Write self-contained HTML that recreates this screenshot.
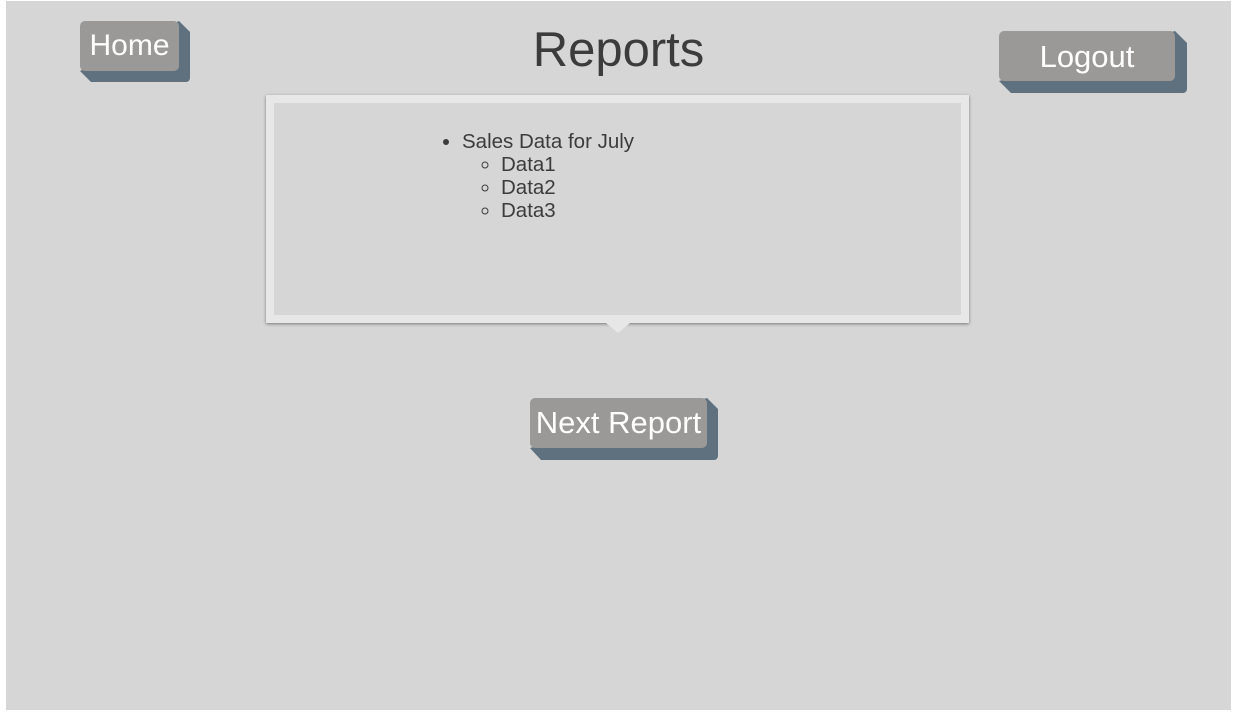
<!DOCTYPE html>
<html><head><style>
html,body{margin:0;padding:0;background:#fff;}
#pg{position:absolute;left:6px;top:1px;width:1225px;height:709px;background:#d6d6d6;font-family:"Liberation Sans",sans-serif;}
.btn{position:absolute;}
.btn .sh{position:absolute;left:0;top:0;background:#5f717e;border-radius:4px;}
.btn .fc{position:absolute;left:0;top:0;background:#9a9997;border-radius:5px;color:#fff;text-align:center;white-space:nowrap;}
h1{position:absolute;left:0;width:1225px;top:21px;margin:0;text-align:center;font-weight:normal;font-size:49px;color:#3c3c3c;}
#box{position:absolute;left:260px;top:94px;width:687px;height:212px;border:8px solid #e8e7e7;background:#d6d6d6;box-shadow:0 1px 3px rgba(0,0,0,.45);}
#tri{position:absolute;left:600px;top:322px;width:0;height:0;border-left:12px solid transparent;border-right:12px solid transparent;border-top:10px solid #e8e7e7;}
ul{margin:0;padding:0;}
</style></head><body><div id="pg">
<div class="btn" style="left:74px;top:20px;">
 <div class="sh" style="width:110px;height:61px;clip-path:polygon(99px 0,110px 11px,110px 61px,11px 61px,0 50px);"></div>
 <div class="fc" style="width:99px;height:50px;font-size:30px;line-height:50px;">Home</div>
</div>
<h1>Reports</h1>
<div class="btn" style="left:993px;top:30px;">
 <div class="sh" style="width:188px;height:62px;clip-path:polygon(176px 0,188px 12px,188px 62px,12px 62px,0 50px);"></div>
 <div class="fc" style="width:176px;height:50px;font-size:31px;line-height:52px;">Logout</div>
</div>
<div id="box"><div style="position:absolute;left:164px;top:27px;color:#3c3c3c;font-size:20.5px;line-height:23px;">
<ul style="list-style:disc;padding-left:24px;"><li>Sales Data for July
<ul style="list-style:circle;padding-left:39px;"><li>Data1</li><li>Data2</li><li>Data3</li></ul></li></ul></div></div>
<div id="tri"></div>
<div class="btn" style="left:524px;top:397px;">
 <div class="sh" style="width:188px;height:62px;clip-path:polygon(177px 0,188px 11px,188px 62px,11px 62px,0 50px);"></div>
 <div class="fc" style="width:177px;height:50px;font-size:31px;line-height:50px;">Next Report</div>
</div>
</div></body></html>
